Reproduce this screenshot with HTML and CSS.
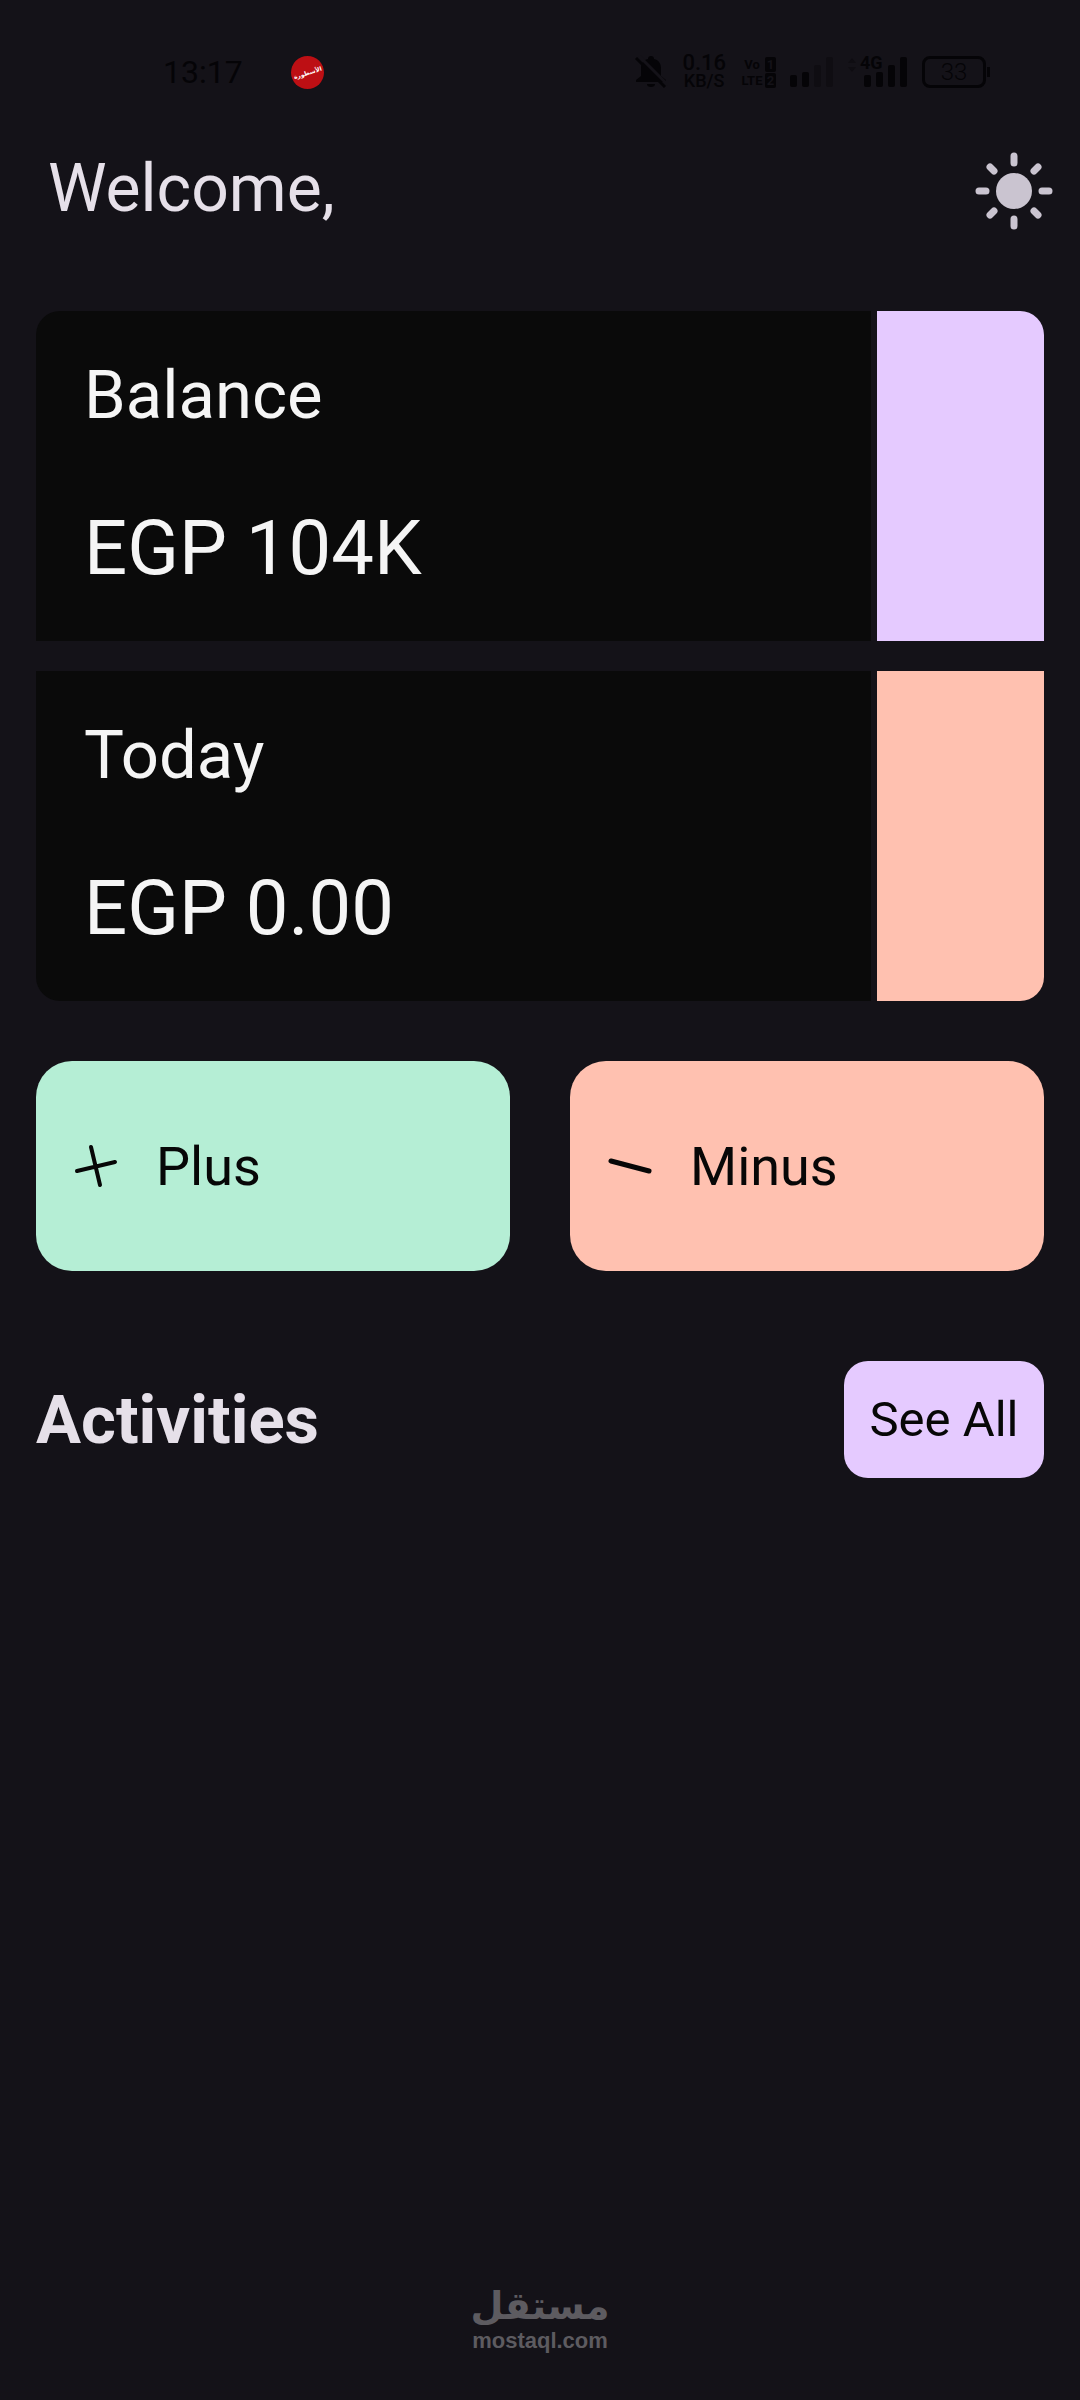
FILE: index.html
```html
<!DOCTYPE html>
<html lang="en">

<head>
    <meta charset="UTF-8" />
    <meta name="viewport" content="width=device-width, initial-scale=1.0" />
    <title>Wallet</title>
    <link rel="stylesheet" href="styles.css">
</head>

<body>
    <div class="status-bar">
        <div class="status-left">
            <span class="clock">13:17</span>
            <span class="app-badge" lang="ar" dir="rtl"><span class="app-name">الأسطورة</span></span>
        </div>
        <div class="status-right">
            <svg class="bell" width="34" height="34" viewBox="0 0 34 34">
                <path d="M17 1a3 3 0 0 0-3 3C9 5 7 9 7 13v8l-5 4v2h30v-2l-5-4v-8c0-4-2-8-7-9a3 3 0 0 0-3-3z" />
                <path d="M13 29h8a4 3 0 0 1-8 0z" />
                <path class="bell-gap" d="M5 1l29 29" />
                <path class="bell-slash" d="M2 3l29 29" />
            </svg>
            <div class="speed">
                <span class="speed-value">0.16</span>
                <span class="speed-unit">KB/S</span>
            </div>
            <div class="volte">
                <span>Vo</span><span class="sim">1</span>
                <span>LTE</span><span class="sim">2</span>
            </div>
            <svg class="signal" width="44" height="34" viewBox="0 0 44 34">
                <rect x="0" y="20" width="7" height="12" rx="2" />
                <rect x="12" y="17" width="7" height="15" rx="2" />
                <rect class="faint" x="24" y="10" width="7" height="22" rx="2" />
                <rect class="faint" x="36" y="2" width="7" height="30" rx="2" />
            </svg>
            <div class="mobile-data">
                <svg class="signal" width="60" height="34" viewBox="0 0 60 34">
                    <path class="faint" d="M0 8l4-5 4 5zM0 12l4 5 4-5z" />
                    <rect x="16" y="20" width="7" height="12" rx="2" />
                    <rect x="28" y="17" width="7" height="15" rx="2" />
                    <rect x="40" y="10" width="7" height="22" rx="2" />
                    <rect x="52" y="2" width="7" height="30" rx="2" />
                </svg>
                <span class="network">4G</span>
            </div>
            <div class="battery"><span>33</span></div>
        </div>
    </div>

    <header class="header">
        <h1>Welcome,</h1>
        <button class="theme-button" aria-label="Light mode">
            <svg width="78" height="78" viewBox="0 0 78 78">
                <circle cx="39" cy="39" r="18" />
                <path d="M39 4v7M39 67v7M4 39h7M67 39h7M15 15l4 4M59 59l4 4M15 63l4-4M59 19l4-4" />
            </svg>
        </button>
    </header>

    <main>
        <section class="cards">
            <div class="card">
                <div class="card-info">
                    <h2>Balance</h2>
                    <p>EGP 104K</p>
                </div>
                <div class="card-color purple"></div>
            </div>
            <div class="card">
                <div class="card-info">
                    <h2>Today</h2>
                    <p>EGP 0.00</p>
                </div>
                <div class="card-color peach"></div>
            </div>
        </section>

        <div class="actions">
            <button class="action mint">
                <svg width="48" height="48" viewBox="0 0 48 48">
                    <path d="M5 29l38-9M19 5l9 38" />
                </svg>
                Plus
            </button>
            <button class="action peach">
                <svg width="48" height="48" viewBox="0 0 48 48">
                    <path class="thick" d="M5 19l38 10" />
                </svg>
                Minus
            </button>
        </div>

        <section class="activities">
            <h2>Activities</h2>
            <button class="see-all purple">See All</button>
        </section>
    </main>

    <footer class="brand">
        <span class="brand-arabic" lang="ar" dir="rtl">مستقل</span>
        <span class="brand-latin">mostaql.com</span>
    </footer>
</body>

</html>
```

FILE: styles.css
```css
* {
    box-sizing: border-box;
}

body {
    margin: 0;
    min-height: 100vh;
    display: flex;
    flex-direction: column;
    background-color: #141218;
    color: #e6e0e9;
    font-family: Roboto, "Noto Sans", sans-serif;
}

h1,
h2,
p {
    margin: 0;
    font-weight: 400;
}

button {
    border: 0;
    font-family: inherit;
    color: #070707;
    cursor: pointer;
}

/* status bar */
.status-bar {
    display: flex;
    justify-content: space-between;
    align-items: center;
    height: 144px;
    padding: 0 94px 0 163px;
    color: #050407;
}

.status-left,
.status-right {
    display: flex;
    align-items: center;
}

.status-left {
    gap: 48px;
}

.status-right {
    gap: 14px;
}

.clock {
    font-size: 32px;
}

.app-badge {
    display: flex;
    justify-content: center;
    align-items: center;
    width: 33px;
    height: 33px;
    border-radius: 50%;
    background-color: #bd0f14;
    color: white;
}

.app-name {
    font-family: "DejaVu Sans", sans-serif;
    font-size: 6px;
    font-weight: bold;
    transform: rotate(-18deg);
}

.bell,
.signal {
    display: block;
    fill: #050407;
}

.bell-gap,
.bell-slash {
    fill: none;
    stroke: #050407;
    stroke-width: 3;
}

.bell-gap {
    stroke: #141218;
}

.faint {
    fill: #0f0d12;
}

.speed {
    display: flex;
    flex-direction: column;
    align-items: center;
    font-weight: 500;
}

.speed-value {
    font-size: 22px;
    line-height: 18px;
}

.speed-unit {
    font-size: 18px;
    line-height: 18px;
}

.volte {
    display: grid;
    grid-template-columns: 24px 11px;
    gap: 1px;
    font-size: 13px;
    font-weight: bold;
    line-height: 15px;
    text-align: center;
}

.sim {
    border-radius: 2px;
    background-color: #050407;
    color: #141218;
}

.mobile-data {
    position: relative;
}

.network {
    position: absolute;
    top: 0;
    left: 12px;
    background-color: #141218;
    font-size: 18px;
    font-weight: bold;
    line-height: 16px;
}

.battery {
    position: relative;
    width: 64px;
    height: 32px;
    border: 3px solid #050407;
    border-radius: 8px;
    font-size: 24px;
    font-weight: 300;
    line-height: 26px;
    text-align: center;
}

.battery::after {
    content: "";
    position: absolute;
    top: 8px;
    right: -7px;
    width: 3px;
    height: 10px;
    background-color: #050407;
}

/* header */
.header {
    display: flex;
    justify-content: space-between;
    align-items: flex-start;
    height: 92px;
    padding: 0 27px 0 48px;
}

.header h1 {
    font-size: 66px;
    line-height: 90px;
}

.theme-button {
    padding: 8px 0;
    background: none;
}

.theme-button svg {
    display: block;
    fill: #cac4d0;
    stroke: #cac4d0;
}

.theme-button circle {
    stroke: none;
}

.theme-button path {
    stroke-width: 7;
    stroke-linecap: round;
}

/* cards */
main {
    padding: 75px 36px 0;
}

.cards {
    display: flex;
    flex-direction: column;
    gap: 30px;
    border-radius: 24px;
    overflow: hidden;
}

.card {
    display: grid;
    grid-template-columns: 5fr 1fr;
    gap: 6px;
}

.card-info {
    display: flex;
    flex-direction: column;
    gap: 72px;
    padding: 48px;
    background-color: #0a0a0a;
    color: #f5f5f5;
}

.card-info h2 {
    font-size: 67px;
    line-height: 72px;
}

.card-info p {
    font-size: 76px;
    line-height: 90px;
}

.purple {
    background-color: #e5caff;
}

.peach {
    background-color: #ffc1b0;
}

.mint {
    background-color: #b5eed5;
}

/* plus and minus */
.actions {
    display: grid;
    grid-template-columns: 1fr 1fr;
    gap: 60px;
    margin-top: 60px;
}

.action {
    display: flex;
    align-items: center;
    gap: 36px;
    height: 210px;
    padding: 0 36px;
    border-radius: 36px;
    font-size: 54px;
}

.action svg {
    fill: none;
    stroke: #070707;
    stroke-width: 4;
    stroke-linecap: round;
}

.action .thick {
    stroke-width: 5;
}

/* activities */
.activities {
    display: flex;
    justify-content: space-between;
    align-items: center;
    margin-top: 90px;
}

.activities h2 {
    font-size: 67px;
    font-weight: 700;
}

.see-all {
    min-width: 200px;
    padding: 24px;
    border-radius: 24px;
    font-size: 49px;
    line-height: 69px;
}

/* brand at the bottom */
.brand {
    display: flex;
    flex-direction: column;
    align-items: center;
    margin-top: auto;
    padding-bottom: 48px;
    color: #5d5b60;
    font-weight: bold;
}

.brand-arabic {
    font-family: "DejaVu Sans", sans-serif;
    font-size: 38px;
    line-height: 48px;
}

.brand-latin {
    font-family: "Liberation Sans", Arial, sans-serif;
    font-size: 22px;
    line-height: 22px;
}
```
